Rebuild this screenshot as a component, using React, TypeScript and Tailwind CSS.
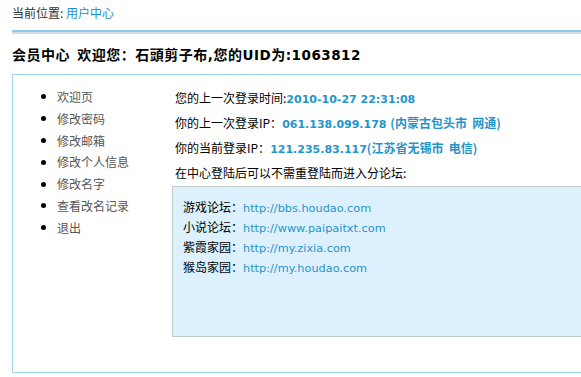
const menu = ['欢迎页', '修改密码', '修改邮箱', '修改个人信息', '修改名字', '查看改名记录', '退出'];

const forums = [
  { name: '游戏论坛', url: 'http://bbs.houdao.com' },
  { name: '小说论坛', url: 'http://www.paipaitxt.com' },
  { name: '紫霞家园', url: 'http://my.zixia.com' },
  { name: '猴岛家园', url: 'http://my.houdao.com' },
];

const cjk = "font-['Noto_Sans_CJK_SC','DejaVu_Sans',sans-serif]";
const val = "font-['DejaVu_Sans','Noto_Sans_CJK_SC',sans-serif] text-[11px] font-bold text-[#1f95cb]";
const latin = "font-['DejaVu_Sans',sans-serif] text-[13.5px]";

export default function App() {
  return (
    <div className={`w-[581px] h-[377px] overflow-hidden bg-white pl-[12px] text-[12px] text-black ${cjk}`}>
      {/* breadcrumb */}
      <div className="h-[30px] pt-[4px] leading-[18px] text-[#333]">
        当前位置: <span className="text-[#1f8fc6]">用户中心</span>
      </div>
      <div className="h-[2px] bg-[#8ccbec]" />
      <div className="h-[2px] bg-[#d4dbe2]" />

      <h1 className="h-[40px] pt-[10px] text-[14px] font-bold leading-[20px] tracking-[0.5px]">
        会员中心&nbsp; 欢迎您：石頭剪子布<span className={latin}>,</span>您的<span className={latin}>UID</span>为<span className={latin}>:1063812</span>
      </h1>

      {/* main box */}
      <div className="w-[600px] h-[299px] border border-[#9fd3ec] flex pt-[11px]">
        <ul className="w-[162px] shrink-0 pl-[28px] text-[#555]">
          {menu.map((m) => (
            <li key={m} className="h-[21.8px] leading-[21.8px] flex items-center">
              <span className="w-[5px] h-[5px] rounded-full bg-black mr-[11px]" />
              {m}
            </li>
          ))}
        </ul>

        <div className="flex-1">
          <div className="h-[24px] leading-[24px]">
            您的上一次登录时间:<span className={val}>2010-10-27 22:31:08</span>
          </div>
          <div className="h-[25px] leading-[25px]">
            你的上一次登录IP：<span className={val}>061.138.099.178 </span>
            <span className="font-bold text-[#1f95cb]">(内蒙古包头市&nbsp; 网通)</span>
          </div>
          <div className="h-[25px] leading-[25px]">
            你的当前登录IP：<span className={val}>121.235.83.117</span>
            <span className="font-bold text-[#1f95cb]">(江苏省无锡市&nbsp; 电信)</span>
          </div>
          <div className="h-[26px] leading-[25px]">在中心登陆后可以不需重登陆而进入分论坛:</div>

          <div className="ml-[-3px] h-[151px] border border-[#c4c9cc] bg-[#dcf1fd] pt-[10px] pl-[10px]">
            {forums.map((f) => (
              <div key={f.name} className="h-[20px] leading-[20px]">
                {f.name}：
                <span className="font-['DejaVu_Sans',sans-serif] text-[11.3px] text-[#2a93c9]">{f.url}</span>
              </div>
            ))}
          </div>
        </div>
      </div>
    </div>
  );
}
